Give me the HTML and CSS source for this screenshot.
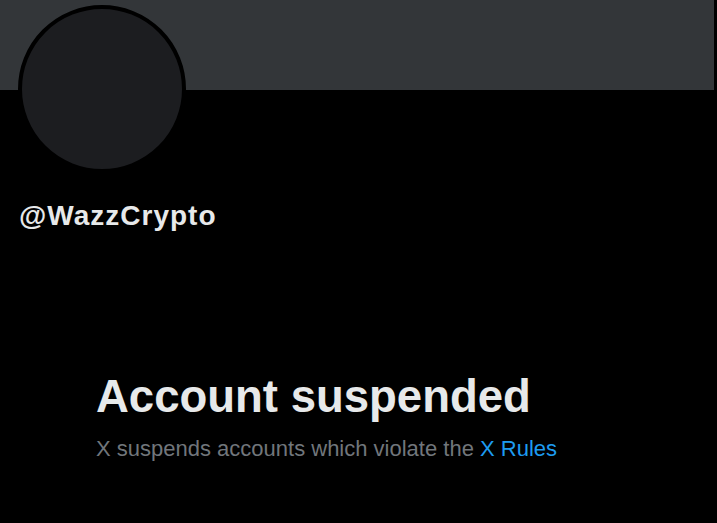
FILE: index.html
```html
<!DOCTYPE html>
<html>
<head>
<meta charset="utf-8">
<link rel="stylesheet" href="styles.css">
</head>
<body>
<div class="page">
  <div class="header">
    <div class="banner"></div>
    <div class="avatar"></div>
  </div>
  <div class="handle">@WazzCrypto</div>
  <div class="notice">
    <h1 class="title">Account suspended</h1>
    <p class="desc">X suspends accounts which violate the <a class="link" href="#">X Rules</a></p>
  </div>
</div>
</body>
</html>
```
FILE: styles.css
```css
html, body {
  margin: 0;
  padding: 0;
  background: #000;
}
.page {
  width: 717px;
  height: 523px;
  background: #000;
  font-family: "Liberation Sans", Arial, sans-serif;
  overflow: hidden;
}
.header {
  position: relative;
  height: 172px;
}
.banner {
  height: 90px;
  width: 714px;
  background: #333639;
}
.avatar {
  position: absolute;
  left: 18px;
  top: 5px;
  width: 160px;
  height: 160px;
  border-radius: 50%;
  border: 4px solid #000;
  background: #1c1d20;
}
.handle {
  margin: 28px 0 0 19px;
  color: #e7e9ea;
  font-weight: 700;
  font-size: 28px;
  line-height: 32px;
  letter-spacing: 1px;
}
.notice {
  margin: 139px 0 0 96px;
}
.title {
  margin: 0;
  color: #e7e9ea;
  font-size: 45.5px;
  line-height: 52px;
  font-weight: 700;
}
.desc {
  margin: 12px 0 0 0;
  color: #71767b;
  font-size: 22px;
  line-height: 28px;
}
.link {
  color: #1d9bf0;
  text-decoration: none;
}
```
